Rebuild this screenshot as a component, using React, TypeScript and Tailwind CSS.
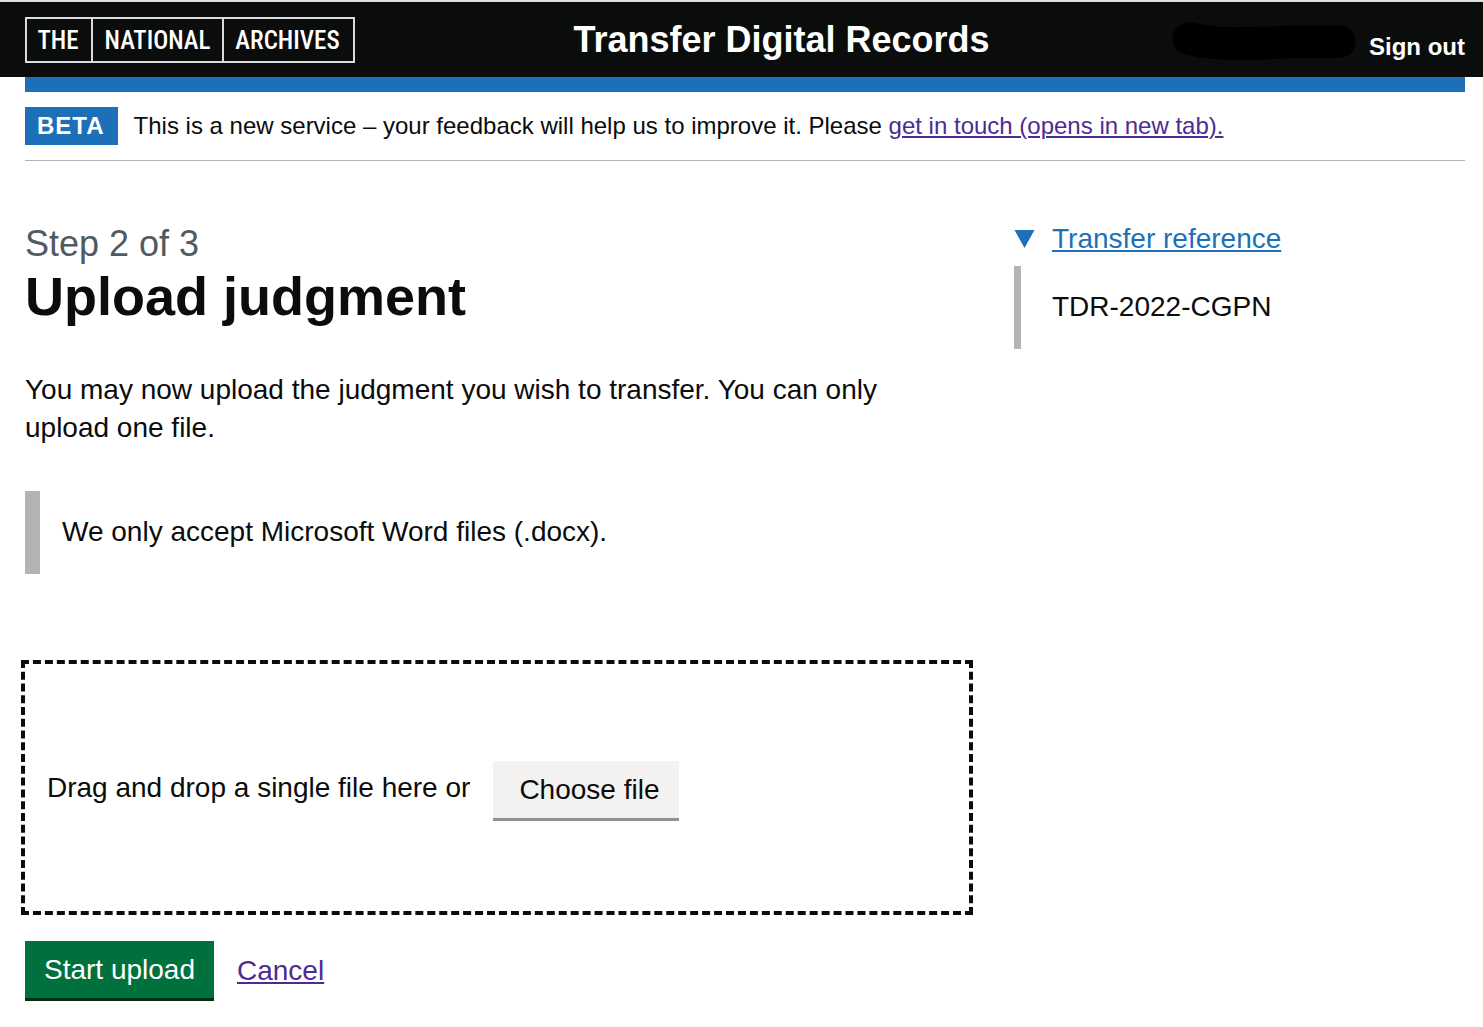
import React from "react";

const focusRing = "focus:outline-3 focus:outline-[#ffdd00]";

function Logo() {
  return (
    <a
      href="#home"
      aria-label="The National Archives"
      className="flex h-[46px] w-[330px] shrink-0 border-2 border-[#d9dada] font-['Roboto_Condensed','Liberation_Sans_Narrow','Roboto',sans-serif] text-[25px] font-medium leading-[43px] text-white"
    >
      <span className="w-[66px] border-r-2 border-[#d9dada] pr-[2px] text-center">THE</span>
      <span className="w-[131px] border-r-2 border-[#d9dada] text-center">NATIONAL</span>
      <span className="flex-1 pr-[2px] text-center">ARCHIVES</span>
    </a>
  );
}

function Header() {
  return (
    <header className="border-t-2 border-[#dee0e2] bg-[#0b0c0c] pr-[18px] pl-[25px] text-white">
      <div className="grid h-[75px] grid-cols-[15fr_auto_13fr] items-start">
        <div className="flex pt-[15px]">
          <Logo />
        </div>
        <a href="#service" className="pt-[17px] text-[36px] leading-[42px] font-bold whitespace-nowrap">
          Transfer Digital Records
        </a>
        <div className="flex items-start justify-end gap-[13px] pt-[20px]">
          <svg aria-hidden="true" width="184" height="40" viewBox="0 0 184 40" className="shrink-0">
            <path
              d="M17 .5C8 .5 .5 8 .5 17c0 9 6 15 16 16 14 4 33 5 60 5 22 0 32-2 50-2h40c10 0 17-7 17-16 0-10-7-16.500-17-16.500h-43C97 4 82 6 51 5 39 5 28 1 17 .5Z"
              fill="#000000"
            />
          </svg>
          <a href="#sign-out" className="pt-[9px] text-[24px] leading-[32px] font-bold whitespace-nowrap">
            Sign out
          </a>
        </div>
      </div>
    </header>
  );
}

function PhaseBanner() {
  return (
    <div className="flex items-center gap-4 border-t-[15px] border-b border-t-[#1d70b8] border-b-[#b1b4b6] py-[15px]">
      <strong className="bg-[#1d70b8] pr-[13px] pl-3 text-[24px] leading-[38px] font-bold tracking-[1px] text-white">
        BETA
      </strong>
      <p className="text-[24px] leading-[38px]">
        This is a new service – your feedback will help us to improve it. Please{" "}
        <a href="#feedback" className="text-[#4c2c92] underline decoration-2 underline-offset-2">
          get in touch (opens in new tab).
        </a>
      </p>
    </div>
  );
}

function UploadForm() {
  return (
    <form onSubmit={(e) => e.preventDefault()}>
      <div className="mr-px flex h-[247px] items-center pl-[22px] outline-4 outline-dashed outline-[#0b0c0c]">
        <span>Drag and drop a single file here or</span>
        <label
          htmlFor="file-selection"
          className="mt-[6px] ml-[23px] cursor-pointer border-b-3 border-[#929191] bg-[#f3f2f1] pr-[20px] pl-[26px] leading-[57px]"
        >
          Choose file
        </label>
        <input id="file-selection" type="file" accept=".docx" className="sr-only" />
      </div>
      <div className="mt-[30px] flex items-center gap-[23px]">
        <button
          type="submit"
          className={`border-b-3 border-[#002d18] bg-[#00703c] px-[19px] leading-[57px] text-white ${focusRing}`}
        >
          Start upload
        </button>
        <a href="#cancel" className="text-[#4c2c92] underline decoration-2 underline-offset-2">
          Cancel
        </a>
      </div>
    </form>
  );
}

function TransferReference() {
  return (
    <details open className="-ml-px">
      <summary className="flex cursor-pointer list-none items-center gap-[17px] text-[#1d70b8]">
        <svg aria-hidden="true" width="21" height="18" viewBox="0 0 21 18">
          <path d="M.5 0h20L10.500 18Z" fill="currentColor" />
        </svg>
        <span className="underline decoration-2 underline-offset-2">Transfer reference</span>
      </summary>
      <p className="mt-2 border-l-[7px] border-[#b1b4b6] pt-[22px] pb-[23px] pl-[31px]">TDR-2022-CGPN</p>
    </details>
  );
}

export default function App() {
  return (
    <div className="min-h-screen bg-white font-['Liberation_Sans',Arial,sans-serif] text-[28px] leading-[38px] text-[#0b0c0c]">
      <Header />
      <div className="pr-[18px] pl-[25px]">
        <PhaseBanner />
        <div className="grid grid-cols-3 gap-[45px] pt-[59px]">
          <main className="col-span-2 pt-px">
            <h1 className="text-[54px] leading-[58px] font-bold">
              <span className="block text-[36px] leading-[46px] font-normal text-[#505a5f]">Step 2 of 3</span>
              Upload judgment
            </h1>
            <p className="mt-[46px] pr-6">
              You may now upload the judgment you wish to transfer. You can only upload one file.
            </p>
            <div className="mt-[44px] mb-[90px] border-l-[15px] border-[#b1b4b6] pt-[22px] pb-[23px] pl-[22px]">
              We only accept Microsoft Word files (.docx).
            </div>
            <UploadForm />
          </main>
          <aside>
            <TransferReference />
          </aside>
        </div>
      </div>
    </div>
  );
}
